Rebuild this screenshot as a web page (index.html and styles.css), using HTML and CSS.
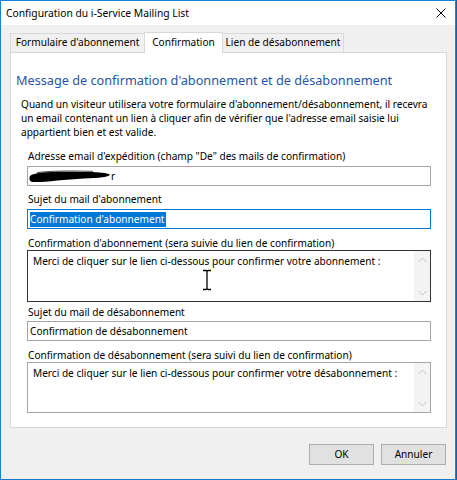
FILE: index.html
```html
<!DOCTYPE html>
<html lang="fr">
<head>
<meta charset="utf-8">
<title>Configuration du i-Service Mailing List</title>
<link rel="stylesheet" href="styles.css">
</head>
<body>
<div class="window">
  <div class="titlebar">
    <span class="title">Configuration du i-Service Mailing List</span>
    <svg class="close" width="10" height="10" viewBox="0 0 10 10"><path d="M0.5 0.5 L9.5 9.5 M9.5 0.5 L0.5 9.5" stroke="#000" stroke-width="1" fill="none"/></svg>
  </div>
  <div class="client">
    <div class="tabs">
      <div class="tab tab-form">Formulaire d'abonnement</div>
      <div class="tab tab-conf active">Confirmation</div>
      <div class="tab tab-lien">Lien de désabonnement</div>
    </div>
    <div class="panel">
      <h1 class="heading">Message de confirmation d'abonnement et de désabonnement</h1>
      <p class="intro">Quand un visiteur utilisera votre formulaire d'abonnement/désabonnement, il recevra<br>un email contenant un lien à cliquer afin de vérifier que l'adresse email saisie lui<br>appartient bien et est valide.</p>

      <div class="field f1">
        <div class="label lab-input">Adresse email d'expédition (champ "De" des mails de confirmation)</div>
        <div class="input"><svg class="redact" width="82" height="13" viewBox="0 0 82 13"><path d="M1 6 C 6 1, 30 1.5, 60 2 C 70 2, 78 3, 81 4.5 C 81 7, 70 8, 55 8.5 C 35 9.5, 15 12.5, 4 12 C 0 11.5, 0 8, 1 6 Z" fill="#000"/><path d="M8 2.5 C 25 0.5, 45 1, 64 1.3" stroke="#333" stroke-width="0.9" fill="none"/></svg>r</div>
      </div>

      <div class="field f2">
        <div class="label lab-input">Sujet du mail d'abonnement</div>
        <div class="input focused"><span class="selected">Confirmation d'abonnement</span></div>
      </div>

      <div class="field f3">
        <div class="label">Confirmation d'abonnement (sera suivie du lien de confirmation)</div>
        <div class="memo hover memo-1">
          <div class="memo-text">Merci de cliquer sur le lien ci-dessous pour confirmer votre abonnement :</div>
          <div class="scrollbar">
            <svg width="9" height="6" viewBox="0 0 9 6"><path d="M0.5 5 L4.5 1 L8.5 5" stroke="#c2c2c2" stroke-width="1" fill="none"/></svg>
            <svg width="9" height="6" viewBox="0 0 9 6"><path d="M0.5 1 L4.5 5 L8.5 1" stroke="#c2c2c2" stroke-width="1" fill="none"/></svg>
          </div>
        </div>
      </div>

      <div class="field f4">
        <div class="label lab-input2">Sujet du mail de désabonnement</div>
        <div class="input">Confirmation de désabonnement</div>
      </div>

      <div class="field f5">
        <div class="label">Confirmation de désabonnement (sera suivi du lien de confirmation)</div>
        <div class="memo memo-2">
          <div class="memo-text">Merci de cliquer sur le lien ci-dessous pour confirmer votre désabonnement :</div>
          <div class="scrollbar">
            <svg width="9" height="6" viewBox="0 0 9 6"><path d="M0.5 5 L4.5 1 L8.5 5" stroke="#c2c2c2" stroke-width="1" fill="none"/></svg>
            <svg width="9" height="6" viewBox="0 0 9 6"><path d="M0.5 1 L4.5 5 L8.5 1" stroke="#c2c2c2" stroke-width="1" fill="none"/></svg>
          </div>
        </div>
      </div>
    </div>
    <div class="buttons">
      <div class="btn">OK</div>
      <div class="btn">Annuler</div>
    </div>
  </div>
</div>
<svg class="ibeam" width="12" height="22" viewBox="0 0 12 22">
  <path d="M2 1.5 H5 Q6 1.5 6 3 V19 Q6 20.5 5 20.5 H2 M10 1.5 H7 Q6 1.5 6 3 M6 19 Q6 20.5 7 20.5 H10" stroke="#fff" stroke-width="3" fill="none" stroke-linecap="square"/>
  <path d="M2 1.5 H5 Q6 1.5 6 3 V19 Q6 20.5 5 20.5 H2 M10 1.5 H7 Q6 1.5 6 3 M6 19 Q6 20.5 7 20.5 H10" stroke="#000" stroke-width="1.3" fill="none"/>
</svg>
</body>
</html>
```
FILE: styles.css
```css
html, body {
  margin: 0;
  padding: 0;
}
body {
  width: 457px;
  height: 480px;
  overflow: hidden;
  background: #1a5fa8;
  font-family: "Noto Sans", "Open Sans", sans-serif;
  font-size: 10.1px;
  color: #000;
  position: relative;
}
.window {
  width: 456px;
  height: 480px;
  box-sizing: border-box;
  border: 1px solid #1883d7;
  border-bottom-color: #1878cc;
  display: flex;
  flex-direction: column;
  background: #f0f0f0;
}
.titlebar {
  height: 24px;
  background: #fff;
  display: flex;
  align-items: center;
  justify-content: space-between;
  padding: 0 9px 0 5px;
  flex: none;
}
.title {
  font-size: 10.3px;
  line-height: 24px;
}
.close {
  display: block;
}
.client {
  flex: 1;
  background: #f0f0f0;
  padding: 7px 8px 0 9px;
  display: flex;
  flex-direction: column;
}
.tabs {
  height: 20px;
  display: flex;
  align-items: flex-end;
}
.tab {
  height: 19px;
  box-sizing: border-box;
  border: 1px solid #d9d9d9;
  border-bottom: none;
  background: #f0f0f0;
  line-height: 17px;
  text-align: center;
  white-space: nowrap;
}
.tab + .tab {
  margin-left: -1px;
}
.tab-form { width: 135px; }
.tab-conf { width: 79px; }
.tab-lien { width: 122px; }
.tab.active {
  height: 21px;
  margin-bottom: -1px;
  background: #fff;
  position: relative;
  z-index: 1;
  line-height: 18px;
}
.panel {
  height: 376px;
  box-sizing: border-box;
  border: 1px solid #d9d9d9;
  background: #fff;
  display: flex;
  flex-direction: column;
}
.heading {
  margin: 17px 0 0 5px;
  font-size: 12.7px;
  line-height: 20px;
  font-weight: normal;
  color: #1f56a8;
  white-space: nowrap;
}
.intro {
  margin: 7px 0 0 10px;
  line-height: 14px;
  white-space: nowrap;
}
.field {
  margin-left: 16px;
  margin-right: 15px;
  display: flex;
  flex-direction: column;
}
.f1 { margin-top: 10px; }
.f2 { margin-top: 6px; }
.f3 { margin-top: 7px; }
.f4 { margin-top: 3px; }
.f5 { margin-top: 7px; }
.label {
  line-height: 14px;
  padding-left: 1px;
  white-space: nowrap;
}
.lab-input { margin-bottom: 3px; }
.lab-input2 { margin-bottom: 2px; }
.input {
  height: 20px;
  box-sizing: border-box;
  border: 1px solid #a6a6a6;
  padding-left: 2px;
  line-height: 18px;
  display: flex;
  align-items: center;
  white-space: nowrap;
}
.input.focused {
  border-color: #0078d7;
}
.selected {
  background: #0078d7;
  color: #fff;
  line-height: 15px;
  padding: 0 1px 0 0;
}
.redact {
  display: block;
  margin-left: -1px;
  margin-top: 1px;
}
.memo {
  box-sizing: border-box;
  border: 1px solid #a6a6a6;
  display: flex;
}
.memo-1 { height: 52px; }
.memo-2 { height: 51px; }
.memo.hover {
  border-color: #333;
}
.memo-text {
  flex: 1;
  padding: 3px 0 0 5px;
  line-height: 14px;
  white-space: nowrap;
  overflow: hidden;
}
.scrollbar {
  width: 16px;
  background: #f4f4f4;
  display: flex;
  flex-direction: column;
  justify-content: space-between;
  align-items: center;
  padding: 6px 0 5px;
}
.scrollbar svg {
  display: block;
}
.buttons {
  margin-top: 16px;
  display: flex;
  justify-content: flex-end;
  gap: 7px;
  padding-right: 1px;
}
.btn {
  width: 65px;
  height: 21px;
  box-sizing: border-box;
  border: 1px solid #adadad;
  background: #e1e1e1;
  text-align: center;
  line-height: 19px;
}
.ibeam {
  position: absolute;
  left: 201px;
  top: 269px;
}
```
